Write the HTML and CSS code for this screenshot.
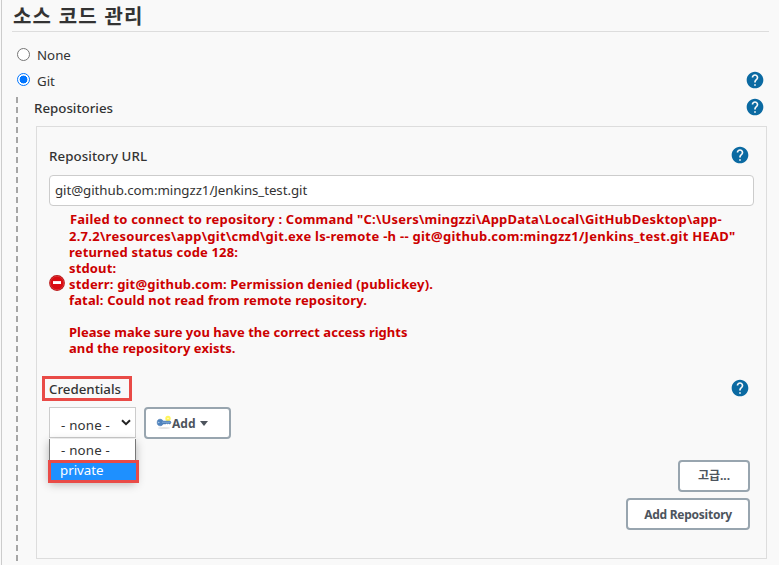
FILE: index.html
```html
<!DOCTYPE html>
<html lang="ko">
<head>
<meta charset="utf-8">
<title>소스 코드 관리</title>
<link rel="stylesheet" href="styles.css">
</head>
<body>
<svg class="defs" aria-hidden="true">
  <symbol id="help" viewBox="0 0 24 24">
    <path d="M12 2C6.48 2 2 6.48 2 12s4.48 10 10 10 10-4.480 10-10S17.520 2 12 2zm1 17h-2v-2h2v2zm2.070-7.750l-.9.920C13.450 12.900 13 13.500 13 15h-2v-.5c0-1.100.450-2.100 1.170-2.830l1.240-1.260c.370-.360.590-.860.590-1.410 0-1.100-.9-2-2-2s-2 .9-2 2H8c0-2.210 1.790-4 4-4s4 1.790 4 4c0 .880-.360 1.680-.930 2.250z"/>
  </symbol>
</svg>
<main class="config">
  <h1 class="title">소스 코드 관리</h1>
  <label class="choice choice-none"><span class="radio"></span><span class="name-none">None</span></label>
  <div class="choice choice-git">
    <span class="radio checked"></span><span class="name-git">Git</span>
    <svg class="help"><use href="#help"/></svg>
  </div>
  <section class="nested">
    <div class="row repos-row">
      <span class="label repos">Repositories</span>
      <svg class="help"><use href="#help"/></svg>
    </div>
    <div class="panel">
      <div class="row url-row">
        <span class="label url-label">Repository URL</span>
        <svg class="help"><use href="#help"/></svg>
      </div>
      <div class="input"><span class="url">git@github.com:mingzz1/Jenkins_test.git</span></div>
      <div class="error">
        <svg class="stop" viewBox="0 0 16 16">
          <circle cx="8" cy="8" r="7.900" fill="#b51212"/>
          <circle cx="8" cy="8" r="6.800" fill="#d90c12" stroke="#e8565a" stroke-width=".5"/>
          <rect x="4" y="6.100" width="8" height="2.900" fill="#fff"/>
        </svg>
        <div class="message">
          <div class="e1">Failed to connect to repository : Command "C:\Users\mingzzi\AppData\Local\GitHubDesktop\app-</div>
          <div class="e2">2.7.2\resources\app\git\cmd\git.exe ls-remote -h -- git@github.com:mingzz1/Jenkins_test.git HEAD"</div>
          <div class="e3">returned status code 128:</div>
          <div class="e4">stdout:</div>
          <div class="e5">stderr: git@github.com: Permission denied (publickey).</div>
          <div class="e6">fatal: Could not read from remote repository.</div>
          <div>&nbsp;</div>
          <div class="e7">Please make sure you have the correct access rights</div>
          <div class="e8">and the repository exists.</div>
        </div>
      </div>
      <div class="row cred-row">
        <span class="mark"><span class="label cred">Credentials</span></span>
        <svg class="help"><use href="#help"/></svg>
      </div>
      <div class="controls">
        <div class="select">
          <span class="none">- none -</span>
          <svg class="chevron" viewBox="0 0 10 7"><path d="M1 1.200l4 4 4-4" fill="none" stroke="#222" stroke-width="2"/></svg>
          <div class="menu">
            <div class="option"><span class="none">- none -</span></div>
            <div class="option active"><span class="private">private</span></div>
          </div>
        </div>
        <div class="button add">
          <svg class="key" viewBox="0 0 16 16">
            <ellipse cx="8" cy="13" rx="6" ry="1" fill="#e4e4e4"/>
            <circle cx="12" cy="3.500" r="2.700" fill="#fff45c"/>
            <path d="M1.200 7.500C1.200 5.300 2.300 4.200 4 4.200c1.500 0 2.600.6 3.100 1.900h7.100l.8 1.200-.8 1.600h-1l-.7-.5-.8.500-1-.5-1 .5H7.100C6.500 10.100 5.600 10.800 4.200 10.800c-2 0-3-1.200-3-3.300z" fill="#4f83be" stroke="#4474ac" stroke-width=".5"/>
            <path d="M6 7.200h8" stroke="#8fb4da" stroke-width=".8"/>
            <circle cx="2.800" cy="7.500" r=".7" fill="#b9d4ee"/>
            <circle cx="12" cy="3.500" r=".8" fill="#fffbd0"/>
          </svg>
          <span class="add-text">Add</span>
          <span class="caret"></span>
        </div>
      </div>
      <div class="actions">
        <div class="button advanced"><span class="adv-text">고급...</span></div>
        <div class="button repository"><span class="repo-text">Add Repository</span></div>
      </div>
    </div>
  </section>
</main>
</body>
</html>
```
FILE: styles.css
```css
* { box-sizing: border-box; }
body {
  margin: 0;
  height: 565px;
  overflow: hidden;
  background: #f9f9f9;
  color: #333;
  font: 13.3px/20px "Noto Sans", "Noto Sans CJK KR", sans-serif;
}
.defs { display: block; width: 0; height: 0; }
.config {
  height: 565px;
  margin-left: 1px;
  padding: 0 10px;
  border-left: 1px solid #ccc;
}
.title {
  height: 32px;
  margin: 0;
  border-bottom: 1px solid #ddd;
  font: bold 20px/32px "Noto Sans CJK KR", sans-serif;
  letter-spacing: 1.1px;
  padding-left: 1px;
}
.choice { display: flex; align-items: center; padding: 0 4px 0 5px; height: 26px; }
.choice-none { margin-top: 9px; }
.choice-none .name-none { padding-top: 2px; }
.choice-git { height: 25px; margin-top: 0; }
.choice-git .name-git { padding-top: 3px; }
.radio {
  flex: none;
  width: 13px;
  height: 13px;
  margin-right: 7px;
  border: 1px solid #767676;
  border-radius: 50%;
  background: #fff;
}
.radio.checked { border-color: #0075ff; background: radial-gradient(circle, #0075ff 3.700px, #fff 4.200px); }
.help { flex: none; width: 20px; height: 20px; margin-left: auto; fill: #0b6aa2; }
.nested {
  margin-left: 4px;
  padding-left: 18px;
  height: 470px;
  position: relative;
}
.nested::before {
  content: "";
  position: absolute;
  left: 0;
  top: 5px;
  width: 2px;
  height: 465px;
  background: repeating-linear-gradient(#a6a6a6 0 6px, transparent 6px 9.955px);
}
.row { display: flex; align-items: center; }
.label { font-weight: 500; }
.repos-row { height: 29px; padding-right: 4px; }
.repos { padding-top: 2px; }
.panel {
  height: 433px;
  margin: 5px 2px 0;
  border: 1px solid #ddd;
  padding: 0 12px;
}
.url-row { height: 48px; padding: 8px 4px 0 0; }
.url-label { padding-top: 1px; letter-spacing: .07px; }
.input {
  height: 31px;
  border: 1px solid #ccc;
  border-radius: 4px;
  background: #fff;
  padding: 4px 5px;
  letter-spacing: -.06px;
}
.error { display: flex; padding-top: 5px; height: 164px; color: #c00; font-weight: bold; font-size: 13px; }
.stop { flex: none; width: 16px; height: 16px; margin-top: 64px; }
.message { margin-left: 4px; line-height: 16px; white-space: nowrap; }
.message div { height: 16px; }
.message div:first-child { height: 17px; padding-left: 1px; }
.e1 { letter-spacing: .2px; }
.e2 { letter-spacing: .268px; }
.e3 { letter-spacing: .16px; }
.e4 { letter-spacing: .14px; }
.e5 { letter-spacing: .17px; }
.e6 { letter-spacing: .14px; }
.e7 { letter-spacing: .02px; }
.e8 { letter-spacing: .07px; }
.cred-row { height: 37px; padding: 0 4px 0 0; }
.cred-row .help { margin-top: -2px; }
.mark {
  width: 90px;
  height: 25px;
  margin-left: -7px;
  padding: 0 4px;
  border: 3px solid #e94b47;
}
.controls { display: flex; }
.select {
  position: relative;
  width: 87px;
  height: 31px;
  padding: 7px 0 0 11px;
  border: 1px solid #ccc;
  background: #fff;
}
.none { letter-spacing: .2px; }
.chevron { position: absolute; right: 4px; top: 11px; width: 10px; height: 7px; }
.menu {
  position: absolute;
  left: -1px;
  top: 31px;
  width: 87px;
  height: 42px;
  border: 1px solid #777;
  border-top: 0;
  background: #fff;
  box-shadow: 0 3px 9px rgba(0, 0, 0, .28);
}
.option { height: 21px; padding-left: 11px; line-height: 22px; }
.option.active {
  width: 91px;
  height: 23px;
  margin-left: -2px;
  padding-left: 9px;
  line-height: 15px;
  border: 3px solid #e94b47;
  background: #1e90ff;
  color: #fff;
}
.button {
  display: flex;
  align-items: center;
  justify-content: center;
  height: 32px;
  border: 2px solid #98a5af;
  border-radius: 4px;
  background: #fff;
  color: #4d545d;
  font-size: 12px;
  font-weight: bold;
}
.add { width: 87px; margin-left: 8px; justify-content: flex-start; padding-left: 10px; }
.add-text { padding-top: 2px; }
.key { width: 16px; height: 16px; }
.caret { margin-left: 5px; border: 4.500px solid transparent; border-top: 5px solid #4d545d; border-bottom: 0; }
.actions { display: flex; flex-direction: column; align-items: flex-end; gap: 6px; padding: 21px 4px 0 0; }
.advanced { width: 72px; }
.repository { width: 124px; letter-spacing: -.25px; }
.repo-text { padding-top: 2px; }
```
